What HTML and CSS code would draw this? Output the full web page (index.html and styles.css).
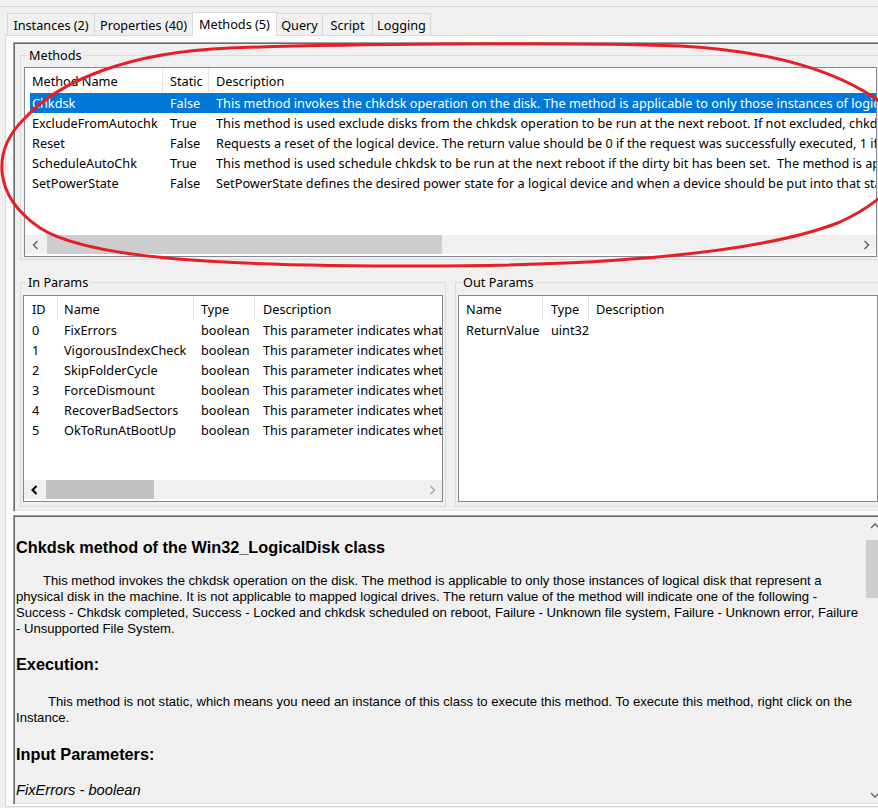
FILE: index.html
```html
<!DOCTYPE html>
<html>
<head>
<meta charset="utf-8">
<title>Methods</title>
<link rel="stylesheet" href="styles.css">
</head>
<body>
<div class="window">
  <div class="topbar"></div>
  <div class="tabs">
    <div class="tab t1">Instances (2)</div>
    <div class="tab t2">Properties (40)</div>
    <div class="tab sel t3">Methods (5)</div>
    <div class="tab t4">Query</div>
    <div class="tab t5">Script</div>
    <div class="tab t6">Logging</div>
  </div>
  <div class="tabpanel">
    <div class="upper">
      <div class="group methods">
        <div class="legend">Methods</div>
        <div class="list mlist">
          <div class="lhead mcols">
            <div class="hc first">Method Name<svg class="sort" width="8" height="5" viewBox="0 0 8 5"><path d="M0.5 4.5 L4 1 L7.5 4.5" fill="none" stroke="#9a9a9a" stroke-width="1"/></svg></div>
            <div class="hc">Static</div>
            <div class="hc last">Description</div>
          </div>
          <div class="lbody mbody">
            <div class="row mrow selected"><div class="c first">Chkdsk</div><div class="c">False</div><div class="c">This method invokes the chkdsk operation on the disk. The method is applicable to only those instances of logical disk that represent a physical disk in the machine.</div></div>
            <div class="row mrow"><div class="c first">ExcludeFromAutochk</div><div class="c">True</div><div class="c">This method is used exclude disks from the chkdsk operation to be run at the next reboot. If not excluded, chkdsk is performed on the disk if the dirty bit has been set.</div></div>
            <div class="row mrow"><div class="c first">Reset</div><div class="c">False</div><div class="c">Requests a reset of the logical device. The return value should be 0 if the request was successfully executed, 1 if the request is not supported and some other value if an error occurred.</div></div>
            <div class="row mrow"><div class="c first">ScheduleAutoChk</div><div class="c">True</div><div class="c">This method is used schedule chkdsk to be run at the next reboot if the dirty bit has been set.&nbsp; The method is applicable to only those instances of logical disk.</div></div>
            <div class="row mrow"><div class="c first">SetPowerState</div><div class="c">False</div><div class="c">SetPowerState defines the desired power state for a logical device and when a device should be put into that state.</div></div>
          </div>
          <div class="hscroll">
            <div class="sarrow"><svg width="8" height="10" viewBox="0 0 8 10"><path d="M5.5 1 L1.5 5 L5.5 9" fill="none" stroke="#606060" stroke-width="1.4"/></svg></div>
            <div class="track"><div class="thumb mthumb"></div></div>
            <div class="sarrow"><svg width="8" height="10" viewBox="0 0 8 10"><path d="M2.5 1 L6.5 5 L2.5 9" fill="none" stroke="#606060" stroke-width="1.4"/></svg></div>
          </div>
        </div>
      </div>
      <div class="params">
        <div class="group inparams">
          <div class="legend">In Params</div>
          <div class="list plist">
            <div class="lhead icols">
              <div class="hc pid">ID</div>
              <div class="hc pname">Name</div>
              <div class="hc ptype">Type</div>
              <div class="hc pdesc last">Description</div>
            </div>
            <div class="lbody pbody">
              <div class="row icols"><div class="c pid">0</div><div class="c pname">FixErrors</div><div class="c ptype">boolean</div><div class="c pdesc">This parameter indicates what should be done to errors found on the disk.</div></div>
              <div class="row icols"><div class="c pid">1</div><div class="c pname">VigorousIndexCheck</div><div class="c ptype">boolean</div><div class="c pdesc">This parameter indicates whether a vigorous check of index entries should be performed.</div></div>
              <div class="row icols"><div class="c pid">2</div><div class="c pname">SkipFolderCycle</div><div class="c ptype">boolean</div><div class="c pdesc">This parameter indicates whether the folder cycle checking should be skipped or not.</div></div>
              <div class="row icols"><div class="c pid">3</div><div class="c pname">ForceDismount</div><div class="c ptype">boolean</div><div class="c pdesc">This parameter indicates whether the drive should be forced to dismount before checking.</div></div>
              <div class="row icols"><div class="c pid">4</div><div class="c pname">RecoverBadSectors</div><div class="c ptype">boolean</div><div class="c pdesc">This parameter indicates whether the bad sectors should be located and the readable information should be recovered.</div></div>
              <div class="row icols"><div class="c pid">5</div><div class="c pname">OkToRunAtBootUp</div><div class="c ptype">boolean</div><div class="c pdesc">This parameter indicates whether the chkdsk operation should be performed at next boot up time.</div></div>
            </div>
            <div class="hscroll">
              <div class="sarrow"><svg width="8" height="10" viewBox="0 0 8 10"><path d="M5.5 1 L1.5 5 L5.5 9" fill="none" stroke="#000" stroke-width="2"/></svg></div>
              <div class="track"><div class="thumb pthumb"></div></div>
              <div class="sarrow"><svg width="8" height="10" viewBox="0 0 8 10"><path d="M2.5 1 L6.5 5 L2.5 9" fill="none" stroke="#a6a6a6" stroke-width="1.4"/></svg></div>
            </div>
          </div>
        </div>
        <div class="group outparams">
          <div class="legend">Out Params</div>
          <div class="list olist">
            <div class="lhead ocols">
              <div class="hc oname">Name</div>
              <div class="hc otype">Type</div>
              <div class="hc odesc last">Description</div>
            </div>
            <div class="lbody obody">
              <div class="row ocols"><div class="c oname">ReturnValue</div><div class="c otype">uint32</div><div class="c odesc"></div></div>
            </div>
          </div>
        </div>
      </div>
    </div>
    <div class="lower">
      <div class="doc">
        <h3 class="dh first-h">Chkdsk method of the Win32_LogicalDisk class</h3>
        <p class="dp p1">This method invokes the chkdsk operation on the disk. The method is applicable to only those instances of logical disk that represent a<br>physical disk in the machine. It is not applicable to mapped logical drives. The return value of the method will indicate one of the following -<br>Success - Chkdsk completed, Success - Locked and chkdsk scheduled on reboot, Failure - Unknown file system, Failure - Unknown error, Failure<br>- Unsupported File System.</p>
        <h3 class="dh h-exec">Execution:</h3>
        <p class="dp p2">This method is not static, which means you need an instance of this class to execute this method. To execute this method, right click on the<br>Instance.</p>
        <h3 class="dh h-input">Input Parameters:</h3>
        <p class="dpi"><i>FixErrors - boolean</i></p>
      </div>
      <div class="vscroll">
        <div class="varrow"><svg width="10" height="8" viewBox="0 0 10 8"><path d="M1 6 L5 2 L9 6" fill="none" stroke="#606060" stroke-width="1.4"/></svg></div>
        <div class="vtrack"><div class="vthumb"></div></div>
        <div class="varrow"><svg width="10" height="8" viewBox="0 0 10 8"><path d="M1 2 L5 6 L9 2" fill="none" stroke="#606060" stroke-width="1.4"/></svg></div>
      </div>
    </div>
  </div>
  <svg class="annot" width="878" height="290" viewBox="0 0 878 290">
    <path d="M 900 118 C 860 80, 790 52, 680 46 C 560 42, 330 44, 230 48 C 130 52, 60 80, 25 118 C -8 150, -8 195, 40 228 C 90 260, 230 266, 420 266 C 600 266, 760 254, 840 222 C 870 208, 885 195, 895 180" fill="none" stroke="#e61e26" stroke-width="3" stroke-linecap="round"/>
  </svg>
</div>
</body>
</html>
```

FILE: styles.css
```css
html, body {
  margin: 0;
  padding: 0;
  overflow: hidden;
  background: #f0f0f0;
}

.window {
  position: relative;
  width: 893px;
  height: 808px;
  font-family: "Noto Sans", "Liberation Sans", sans-serif;
  font-size: 12.7px;
  color: #000;
}

.topbar {
  height: 6px;
  border-bottom: 1px solid #dadada;
}

/* tabs */
.tabs {
  display: flex;
  align-items: flex-end;
  height: 23px;
  margin-top: 5px;
  padding-left: 7px;
}

.tab {
  box-sizing: border-box;
  height: 22px;
  border: 1px solid #d9d9d9;
  border-bottom: none;
  background: #f0f0f0;
  display: flex;
  align-items: center;
  justify-content: center;
  padding-top: 0;
  margin-left: -1px;
  line-height: 14px;
  white-space: nowrap;
}

.tab.t1 { margin-left: 0; width: 88px; }
.tab.t2 { width: 99px; }
.tab.t3 { width: 85px; }
.tab.t4 { width: 47px; }
.tab.t5 { width: 51px; }
.tab.t6 { width: 59px; }

.tab.sel {
  position: relative;
  z-index: 1;
  height: 24px;
  margin-bottom: -1px;
  background: #fff;
  padding-bottom: 2px;
}

.tabpanel {
  margin-left: 5px;
  border: 1px solid #d9d9d9;
  padding: 6px 6px 1px 7px;
  background: #fcfcfc;
}

/* 3D sunken panels */
.upper,
.lower {
  box-sizing: border-box;
  width: 872px;
  border: 1px solid;
  border-color: #a0a0a0 #ffffff #ffffff #a0a0a0;
  box-shadow: inset 1px 1px 0 #696969, inset -1px -1px 0 #e3e3e3;
  padding: 1px;
  background: #f0f0f0;
}

.upper {
  height: 470px;
}

.lower {
  height: 290px;
  margin-top: 3px;
  display: flex;
}

/* group boxes */
.group {
  border: 1px solid #dcdcdc;
}

.legend {
  width: max-content;
  height: 15px;
  line-height: 15px;
  margin: -8px 0 0 3px;
  padding: 0 2px;
  background: #f0f0f0;
}

.group.methods {
  margin: 11px 2px 0 5px;
  padding: 0 3px 2px 3px;
}

.params {
  display: flex;
  gap: 9px;
  margin: 22px 2px 0 5px;
}

.group.inparams {
  box-sizing: border-box;
  width: 426px;
  padding: 0 2px 4px 2px;
}

.group.outparams {
  flex: 1;
  padding: 0 2px 4px 2px;
}

/* list views */
.list {
  box-sizing: border-box;
  border: 1px solid #828790;
  background: #fff;
  display: flex;
  flex-direction: column;
  overflow: hidden;
}

.mlist { margin-top: 4px; height: 190px; }
.plist, .olist { margin-top: 5px; height: 207px; }

.lhead {
  display: grid;
  flex: none;
  background: #fff;
}

.mlist .lhead { height: 25px; }
.plist .lhead, .olist .lhead { height: 24px; }

.hc {
  position: relative;
  display: flex;
  align-items: center;
  padding-left: 7px;
  padding-top: 1px;
  border-right: 1px solid #e5e5e5;
  white-space: nowrap;
  overflow: hidden;
}

.hc.last { border-right: none; }

.sort {
  position: absolute;
  left: 68px;
  top: 2px;
}

.lbody {
  flex: none;
  overflow: hidden;
}

.mbody { height: 142px; }
.pbody { height: 160px; }
.obody { flex: 1; }

.row {
  display: grid;
  height: 20px;
  line-height: 21px;
  white-space: nowrap;
  overflow: hidden;
}

.c {
  overflow: hidden;
  white-space: nowrap;
  padding-left: 7px;
}

/* methods columns */
.mcols { grid-template-columns: 138px 46px 1fr; }
.mrow {
  grid-template-columns: 133px 46px 1fr;
  margin-left: 5px;
}
.mrow .c.first { padding-left: 2px; }
.mrow.selected {
  background: #0078d7;
  color: #fff;
}

/* in params columns */
.icols { grid-template-columns: 34px 136px 61px 1fr; }
.icols .pid { padding-left: 8px; }
.icols .pname { padding-left: 6px; }
.icols .ptype { padding-left: 7px; }
.icols .pdesc { padding-left: 8px; }

/* out params columns */
.ocols { grid-template-columns: 84px 46px 1fr; }
.ocols .oname { padding-left: 7px; }
.ocols .otype { padding-left: 8px; }
.ocols .odesc { padding-left: 7px; }

/* horizontal scrollbars */
.hscroll {
  flex: none;
  display: flex;
  height: 19px;
  margin-bottom: 2px;
  background: #f0f0f0;
}

.sarrow {
  width: 21px;
  display: flex;
  align-items: center;
  justify-content: center;
}

.track {
  flex: 1;
  display: flex;
}

.thumb {
  margin-left: 1px;
  height: 100%;
}

.mthumb { width: 395px; background: #cdcdcd; }
.pthumb { width: 108px; background: #c2c2c2; }

/* lower document pane */
.doc {
  flex: 1;
  overflow: hidden;
  padding-left: 1px;
  font-family: "Liberation Sans", Arial, sans-serif;
  font-size: 13.1px;
  color: #000;
}

.dh {
  font-size: 16.3px;
  font-weight: bold;
  line-height: 19px;
  margin: 0;
  white-space: nowrap;
}

.first-h { margin-top: 21px; }
.h-exec { margin-top: 18px; }
.h-input { margin-top: 19px; }

.dp {
  margin: 0;
  line-height: 16px;
  white-space: nowrap;
}

.p1 { margin-top: 16px; text-indent: 27px; }
.p2 { margin-top: 20px; text-indent: 32px; }

.dpi {
  margin: 17px 0 0 0;
  font-size: 14.67px;
  line-height: 18px;
}

.vscroll {
  width: 17px;
  display: flex;
  flex-direction: column;
  background: #f0f0f0;
}

.varrow {
  height: 17px;
  display: flex;
  align-items: center;
  justify-content: center;
}

.vtrack { flex: 1; }

.vthumb {
  margin-top: 6px;
  height: 58px;
  background: #cdcdcd;
}

/* annotation ellipse */
.annot {
  position: absolute;
  left: 0;
  top: 0;
  pointer-events: none;
  overflow: visible;
}
```
